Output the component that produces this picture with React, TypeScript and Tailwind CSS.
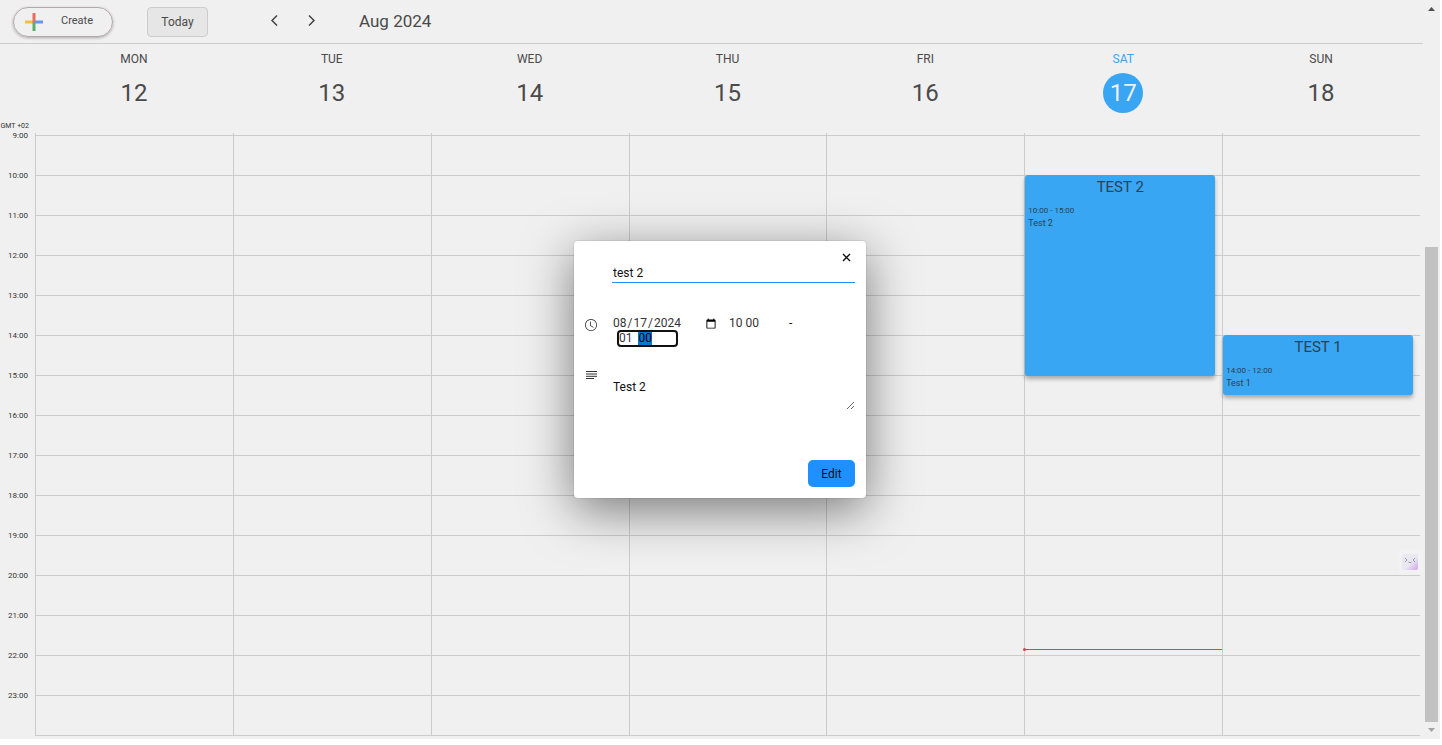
import { useEffect, useRef } from "react";
import { BsClock } from "react-icons/bs";

type CalendarEvent = {
  title: string;
  time: string;
  description: string;
  place: string;
};

type Day = {
  name: string;
  date: number;
  today?: boolean;
  event?: CalendarEvent;
};

const days: Day[] = [
  { name: "MON", date: 12 },
  { name: "TUE", date: 13 },
  { name: "WED", date: 14 },
  { name: "THU", date: 15 },
  { name: "FRI", date: 16 },
  {
    name: "SAT",
    date: 17,
    today: true,
    event: { title: "TEST 2", time: "10:00 - 15:00", description: "Test 2", place: "top-[42px] h-[201px]" },
  },
  {
    name: "SUN",
    date: 18,
    event: { title: "TEST 1", time: "14:00 - 12:00", description: "Test 1", place: "top-[202px] h-[60px]" },
  },
];

const hours = Array.from({ length: 15 }, (_, i) => i + 9);

function PlusIcon() {
  return (
    <svg viewBox="0 0 18 18" className="size-[18px]" aria-hidden="true">
      <path d="M7.5 0h3v9h-3z" fill="#ea6a60" />
      <path d="M0 7.5h9v3H0z" fill="#f0c13c" />
      <path d="M7.5 10.5 10.5 7.5V18h-3z" fill="#56b06c" />
      <path d="M10.5 7.5H18v3H9z" fill="#6498ec" />
      <path d="M7.5 7.5h3l-3 3z" fill="#ea6a60" />
    </svg>
  );
}

function ChevronIcon({ path }: { path: string }) {
  return (
    <svg viewBox="0 0 21 21" className="size-[21px]" aria-hidden="true">
      <path d={path} fill="none" stroke="#3c3c3c" strokeWidth="1.4" />
    </svg>
  );
}

function CloseIcon() {
  return (
    <svg viewBox="0 0 13 13" className="size-[13px]" aria-hidden="true">
      <path d="m3 3 7 7m0-7-7 7" fill="none" stroke="#111111" strokeWidth="1.4" />
    </svg>
  );
}

function NotesIcon() {
  return (
    <svg viewBox="0 0 13 13" className="size-[13px] shrink-0" aria-hidden="true">
      <path d="M1 3.500h11M1 6h11M1 8.300h11M1 10.500h8" fill="none" stroke="#333333" />
    </svg>
  );
}

function Toolbar() {
  return (
    <header className="flex h-11 shrink-0 items-start border-b border-[#cccccc] pt-[7px] pl-[13px] text-[#4a4a4a]">
      <button className="flex h-[30px] w-[100px] items-center rounded-full border border-[#b0a8ac] pl-[11px] text-[11px] shadow-[0_1px_3px_rgba(0,0,0,0.3)]">
        <PlusIcon />
        <span className="mb-[2px] ml-[18px]">Create</span>
      </button>
      <button className="ml-[34px] h-[30px] w-[61px] rounded border border-[#cccccc] bg-[#e6e6e6] text-xs">
        Today
      </button>
      <div className="ml-14 flex h-[27px] items-center gap-4">
        <button aria-label="Previous week">
          <ChevronIcon path="m13 5.500-5 5 5 5" />
        </button>
        <button aria-label="Next week">
          <ChevronIcon path="m8 5.500 5 5-5 5" />
        </button>
      </div>
      <h1 className="ml-[37px] text-[17px] leading-[29px]">Aug 2024</h1>
    </header>
  );
}

function WeekHeader() {
  return (
    <div className="flex h-[89px] shrink-0">
      <div className="flex w-[35px] items-end justify-end pr-[6px] text-[7px] leading-[13px] whitespace-nowrap text-[#333333]">
        GMT +02
      </div>
      {days.map((day) => (
        <div key={day.name} className="flex flex-1 flex-col items-center pt-2 text-[#4a4a4a]">
          <span className={day.today ? "text-xs leading-[14px] text-[#38a6f2]" : "text-xs leading-[14px]"}>
            {day.name}
          </span>
          <span
            className={
              day.today
                ? "mt-[7px] flex size-10 items-center justify-center rounded-full bg-[#38a6f2] text-2xl text-[#f0f0f0]"
                : "mt-[7px] flex size-10 items-center justify-center text-2xl"
            }
          >
            {day.date}
          </span>
        </div>
      ))}
    </div>
  );
}

function EventCard({ event }: { event: CalendarEvent }) {
  return (
    <button
      className={`absolute left-0 right-[7px] flex flex-col rounded-[3px] bg-[#38a6f2] px-[3px] pt-1 text-left text-[#2c4152] shadow-[0_3px_4px_rgba(0,0,0,0.3)] ${event.place}`}
    >
      <span className="self-center text-[15px] leading-4">{event.title}</span>
      <span className="mt-[10px] text-[8px] leading-3">{event.time}</span>
      <span className="text-[9px] leading-[13px]">{event.description}</span>
    </button>
  );
}

function WeekGrid() {
  return (
    <div className="flex overflow-hidden">
      <div className="-mt-[4px] w-[35px] pr-[7px] text-right text-[8px] leading-[14px] text-[#333333]">
        {hours.map((hour) => (
          <div key={hour} className="h-10">
            {hour}:00
          </div>
        ))}
      </div>
      {days.map((day) => (
        <div key={day.name} className="relative flex-1 border-l border-[#cccccc] pt-[2px]">
          {hours.map((hour) => (
            <div key={hour} className="h-10 border-t border-[#cccccc]" />
          ))}
          <div className="border-t border-[#cccccc]" />
          {day.event && <EventCard event={day.event} />}
          {day.today && (
            <div className="absolute inset-x-0 top-[516px] h-px bg-[#f23b3b]">
              <span className="absolute -top-px -left-[2px] size-[3px] rounded-full bg-[#f23b3b]" />
            </div>
          )}
        </div>
      ))}
    </div>
  );
}

function Scrollbar() {
  return (
    <div className="flex w-[17px] shrink-0 flex-col items-center justify-between py-[7px]" aria-hidden="true">
      <svg viewBox="0 0 7 4" className="h-1 w-[7px]">
        <path d="M3.5 0 7 4H0z" fill="#505050" />
      </svg>
      <div className="mt-auto mb-[6px] h-[475px] w-[13px] bg-[#c1c1c1]" />
      <svg viewBox="0 0 7 4" className="h-1 w-[7px]">
        <path d="M3.5 4 7 0H0z" fill="#a3a3a3" />
      </svg>
    </div>
  );
}

function EventDialog() {
  const endRef = useRef<HTMLInputElement>(null);

  useEffect(() => {
    endRef.current?.focus();
    endRef.current?.setSelectionRange(4, 6);
  }, []);

  return (
    <div className="absolute inset-0 flex items-center justify-center">
      <form
        role="dialog"
        aria-label="Edit event"
        className="flex w-[292px] flex-col rounded bg-white px-[11px] pt-[10px] pb-[11px] text-xs text-[#111111] shadow-[0_0_0_1px_rgba(0,0,0,0.06),0_12px_50px_rgba(0,0,0,0.5)]"
      >
        <button type="button" aria-label="Close" className="mr-[2px] self-end">
          <CloseIcon />
        </button>
        <input
          aria-label="Title"
          defaultValue="test 2"
          className="ml-[27px] h-[19px] border-b border-[#1e90ff] pl-px outline-none"
        />
        <div className="mt-[33px] flex">
          <BsClock className="mt-[3px] size-3 shrink-0 text-[#222222]" />
          <div className="ml-[15px] flex flex-wrap items-start">
            <input
              type="date"
              aria-label="Date"
              defaultValue="2024-08-17"
              className="h-[15px] w-[107px] leading-[15px] text-[#333333]"
            />
            <input
              aria-label="Start time"
              defaultValue="10 00"
              className="ml-[10px] h-[14px] w-[60px] leading-[14px] text-[#333333] outline-none"
            />
            <span className="leading-[15px]">-</span>
            <input
              ref={endRef}
              aria-label="End time"
              defaultValue="01  00"
              className="mt-px ml-[7px] h-[13px] w-[57px] rounded-[2px] leading-[13px] text-[#333333] outline-2 outline-[#101010] selection:bg-[#0078d7] selection:text-black"
            />
          </div>
        </div>
        <div className="mt-[23px] flex">
          <NotesIcon />
          <textarea
            aria-label="Description"
            defaultValue="Test 2"
            className="ml-[14px] h-[42px] flex-1 resize pt-3 pl-px leading-[15px] outline-none"
          />
        </div>
        <button type="button" className="mt-[50px] h-[27px] w-[47px] self-end rounded-[5px] bg-[#1e90ff]">
          Edit
        </button>
      </form>
    </div>
  );
}

function AssistantBadge() {
  return (
    <button
      aria-label="Open assistant"
      className="absolute right-[17px] bottom-[164px] flex h-[26px] w-6 items-center justify-end rounded-l bg-[#f2f2f2] pr-[5px]"
    >
      <svg viewBox="0 0 16 16" className="size-4" aria-hidden="true">
        <defs>
          <linearGradient id="badge" x1="0" y1="0" x2="1" y2="1">
            <stop offset="0.55" stopColor="#e9e8f0" />
            <stop offset="1" stopColor="#cfa3ea" />
          </linearGradient>
        </defs>
        <rect width="16" height="16" rx="2" fill="url(#badge)" />
        <path d="m3 4 2 2-2 2M13 4l-2 2 2 2M6.500 8q1.500 1.500 3 0" fill="none" stroke="#999aa5" />
      </svg>
    </button>
  );
}

export default function App() {
  return (
    <div className="flex h-screen bg-white pr-[2px] pb-[6px] font-[Roboto,sans-serif]">
      <div className="relative flex min-w-0 flex-1 overflow-hidden bg-[#f0f0f0]">
        <main className="flex min-w-0 flex-1 flex-col">
          <Toolbar />
          <div className="flex min-h-0 flex-1 flex-col pr-[3px]">
            <WeekHeader />
            <WeekGrid />
          </div>
        </main>
        <Scrollbar />
        <AssistantBadge />
        <EventDialog />
      </div>
    </div>
  );
}
